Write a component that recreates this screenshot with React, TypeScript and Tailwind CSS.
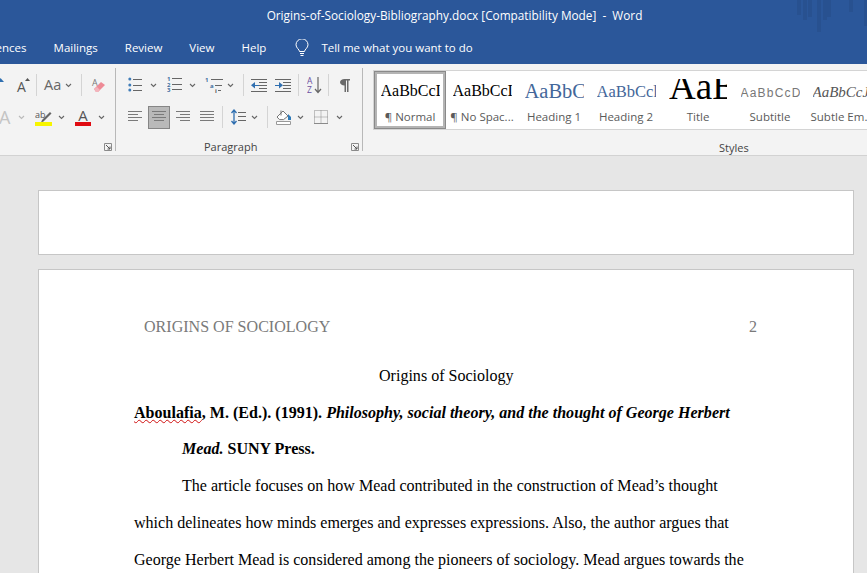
import React from "react";

const ui = "font-['Open_Sans','Noto_Sans',sans-serif]";

const Chev = ({ className = "" }: { className?: string }) => (
  <svg width="7" height="5" viewBox="0 0 7 5" className={className}>
    <path d="M1 1l2.5 2.5L6 1" fill="none" stroke="#666" strokeWidth="1.1" />
  </svg>
);
const Sep = ({ className = "" }: { className?: string }) => <div className={`w-px h-[22px] bg-[#d4d4d4] ${className}`} />;

const Lines = ({ w, ys, xs }: { w: number; ys: number[]; xs?: number[][] }) => (
  <svg width={w} height="16" viewBox={`0 0 ${w} 16`}>
    {ys.map((y, i) => (
      <path key={i} d={`M${xs?.[i]?.[0] ?? 0} ${y + 0.5}H${xs?.[i]?.[1] ?? w}`} stroke="#7a7a7a" strokeWidth="1" />
    ))}
  </svg>
);

const Bullets = () => (
  <svg width="14" height="16" viewBox="0 0 14 16">
    {[2, 8, 13].map((y) => (
      <g key={y}>
        <circle cx="1.8" cy={y} r="1.5" fill="#3f7cb8" />
        <path d={`M5 ${y + 0.5}H14`} stroke="#666" />
      </g>
    ))}
  </svg>
);
const Numbers = () => (
  <svg width="15" height="16" viewBox="0 0 15 16">
    {[[4, "1"], [10, "2"], [15, "3"]].map(([y, t]) => (
      <g key={t as string}>
        <text x="0" y={y as number} fontSize="6" fontWeight="700" fill="#3f6f9f" fontFamily="Open Sans">{t}</text>
        <path d={`M5 ${(y as number) - 2.5}H15`} stroke="#666" />
      </g>
    ))}
  </svg>
);
const Multi = () => (
  <svg width="18" height="16" viewBox="0 0 18 16">
    <text x="0" y="5" fontSize="6" fontWeight="700" fill="#3f6f9f" fontFamily="Open Sans">1</text>
    <path d="M6 2.5H18" stroke="#666" />
    <text x="5" y="10.500" fontSize="6" fontWeight="700" fill="#3f6f9f" fontFamily="Open Sans">a</text>
    <path d="M10 8.500H17" stroke="#666" />
    <text x="10" y="16" fontSize="6" fontWeight="700" fill="#555" fontFamily="Open Sans">i</text>
    <path d="M13 13.500H16" stroke="#666" />
  </svg>
);
const Indent = ({ flip }: { flip?: boolean }) => (
  <svg width="16" height="14" viewBox="0 0 16 14">
    {[1, 13].map((y) => <path key={y} d={`M0 ${y + 0.5}H16`} stroke="#666" />)}
    {[4, 7, 10].map((y) => <path key={y} d={`M8 ${y + 0.5}H16`} stroke="#666" />)}
    {flip ? (
      <path d="M0 7h4V4l4 3.200-4 3.200V8H0z" fill="#2f6fb0" />
    ) : (
      <path d="M8 7H4V4L0 7.200l4 3.200V8h4z" fill="#2f6fb0" />
    )}
  </svg>
);
const Sort = () => (
  <svg width="15" height="18" viewBox="0 0 15 18">
    <text x="0" y="8" fontSize="8.500" fill="#6a4fa0" fontFamily="Open Sans">A</text>
    <text x="0" y="17" fontSize="8.500" fill="#6a4fa0" fontFamily="Open Sans">Z</text>
    <path d="M11 1v15M8 13l3 3.500 3-3.500" fill="none" stroke="#666" strokeWidth="1.200" />
  </svg>
);
const Pilcrow = () => (
  <svg width="10" height="13" viewBox="0 0 10 13">
    <path d="M4.500 13V6.500C2 6.500 0 5 0 3.300S2 0 4.500 0H10v1.400H8.500V13H7V1.400H6V13z" fill="#6a6a6a" />
  </svg>
);
const Spacing = () => (
  <svg width="15" height="16" viewBox="0 0 15 16">
    <path d="M3 1v14M.5 4L3 1l2.500 3M.5 12L3 15l2.500-3" fill="none" stroke="#2f6fb0" strokeWidth="1.300" />
    {[3, 7, 11].map((y) => <path key={y} d={`M7 ${y + 0.5}H15`} stroke="#666" />)}
  </svg>
);
const Shading = () => (
  <svg width="16" height="16" viewBox="0 0 16 16">
    <path d="M1 8l6-6 5 5-4.500 3.600H3.500z" fill="#fff" stroke="#777" />
    <path d="M5 1.500v5" stroke="#777" />
    <path d="M12 5l3 3v3h-3z" fill="#2f7ab8" />
    <path d="M.5 12.500h14v3H.5z" fill="#fff" stroke="#999" />
  </svg>
);
const Borders = () => (
  <svg width="14" height="14" viewBox="0 0 14 14">
    <path d="M.5.5h13v13H.5zM7 .5v13M.5 7h13" fill="none" stroke="#8a8a8a" strokeDasharray="1 1" />
    <path d="M0 13.500h14" stroke="#8a8a8a" />
  </svg>
);
const Launcher = () => (
  <svg width="8" height="8" viewBox="0 0 8 8">
    <path d="M.5 7.500V.5h7v7z" fill="none" stroke="#8a8a8a" />
    <path d="M2 2l4 4M6 3.500V6H3.500" fill="none" stroke="#555" />
  </svg>
);
const Eraser = () => (
  <svg width="15" height="17" viewBox="0 0 15 17">
    <text x="1" y="9" fontSize="9" fill="#777" fontFamily="Open Sans">A</text>
    <path d="M3 12l7-7 4 3-7 7H5z" fill="#ee8a96" />
    <path d="M3 12l2 3h2l2-2-3-3z" fill="#f3b4bc" />
  </svg>
);
const Highlight = () => (
  <svg width="17" height="17" viewBox="0 0 17 17">
    <text x="0" y="9" fontSize="9" fill="#555" fontFamily="Open Sans">ab</text>
    <path d="M7 11l8-8 1.500 1.500-8 8-2.500 1z" fill="#666" />
    <path d="M0 13h17v4H0z" fill="#f7f500" />
  </svg>
);
const Bulb = () => (
  <svg width="14" height="18" viewBox="0 0 14 18">
    <path d="M4.500 12.500c0-2-3.500-3.500-3.500-6.700A6 6 0 0 1 13 5.800c0 3.200-3.500 4.700-3.500 6.700z" fill="none" stroke="#fff" strokeWidth="1" />
    <path d="M5 14.500h4M5.500 16.500h3" stroke="#fff" />
  </svg>
);

const serif = "font-['Liberation_Serif',serif]";
const sans = "font-['Liberation_Sans',sans-serif]";
const styles: { label: string; sample: string; box: string; cls: string }[] = [
  { label: "¶ Normal", sample: "AaBbCcI", box: "h-[35px] w-[59px]", cls: `${serif} text-[16px] text-black pt-[7px]` },
  { label: "¶ No Spac...", sample: "AaBbCcI", box: "h-[35px] w-[59px]", cls: `${serif} text-[16px] text-black pt-[7px]` },
  { label: "Heading 1", sample: "AaBbC", box: "h-[35px] w-[59px]", cls: `${serif} text-[20.5px] text-[#44679a] pt-[7px]` },
  { label: "Heading 2", sample: "AaBbCcl", box: "h-[35px] w-[59px]", cls: `${serif} text-[16.5px] text-[#44679a] pt-[8px]` },
  { label: "Title", sample: "AaB", box: "h-[27px] w-[58px] mt-[8px]", cls: `${serif} text-[37px] text-black -mt-[5px]` },
  { label: "Subtitle", sample: "AaBbCcD", box: "h-[35px] w-[59px]", cls: `${sans} text-[12px] text-[#777] tracking-[1.2px] pt-[9px]` },
  { label: "Subtle Em...", sample: "AaBbCcJ", box: "h-[35px] w-[59px]", cls: `${serif} text-[15px] text-[#555] italic pt-[8px]` },
];

export default function App() {
  return (
    <div className={`w-[867px] h-[573px] overflow-hidden bg-[#e6e6e6] flex flex-col ${ui}`}>
      <header className="relative h-[64px] shrink-0 bg-[#2b579a] text-white overflow-hidden">
        <div className="h-[32px] flex items-center justify-center pl-[42px] text-[11.8px] whitespace-pre">
          Origins-of-Sociology-Bibliography.docx [Compatibility Mode]  -  Word
        </div>
        <nav className="h-[32px] flex items-center text-[11.5px] -ml-[33px] whitespace-nowrap">
          <span>References</span>
          <span className="ml-[27px]">Mailings</span>
          <span className="ml-[27px]">Review</span>
          <span className="ml-[27px]">View</span>
          <span className="ml-[27px]">Help</span>
          <span className="ml-[29px] mr-[12px] flex"><Bulb /></span>
          <span>Tell me what you want to do</span>
        </nav>
        <svg className="absolute left-[790px] top-0" width="77" height="34" viewBox="0 0 77 34">
          {[[7, 15], [13, 20], [18, 17], [27, 32], [33, 20], [37, 17], [59, 12], [74, 26]].map(([x, h]) => (
            <rect key={x} x={x} y="0" width="4" height={h} fill="#285190" />
          ))}
        </svg>
      </header>

      <section className="h-[92px] shrink-0 bg-[#f3f3f3] border-b border-[#d2d2d2] flex text-[#444] text-[11px]">
        <div className="w-[116px] shrink-0 border-r border-[#b8b8b8] flex flex-col my-[4px] relative overflow-hidden">
          <div className="h-[28px] mt-[3px] flex items-center">
            <svg width="7" height="5" viewBox="0 0 7 5" className="-ml-[3px] -mt-[12px]"><path d="M0 5l3.500-4L7 5z" fill="#2f6fb0" /></svg>
            <span className="ml-[13px] w-[8px] text-[#555] text-[14px] leading-none mt-[3px]">A</span>
            <svg width="5" height="4" viewBox="0 0 5 4" className="-mt-[12px]"><path d="M0 0h5L2.500 3z" fill="#555" transform="rotate(180 2.500 2)" /></svg>
            <Sep className="ml-[6px]" />
            <span className="ml-[7px] w-[16px] text-[14.5px] text-[#666] leading-none">Aa</span>
            <Chev className="ml-[5px]" />
            <Sep className="ml-[9px]" />
            <span className="ml-[9px] flex"><Eraser /></span>
          </div>
          <div className="h-[32px] mt-[2px] flex items-center">
            <span className="-ml-[1px] text-[18px] text-[#c4c4c4] w-[13px] leading-none">A</span>
            <Chev className="ml-[6px] opacity-40" />
            <span className="ml-[10px] flex"><Highlight /></span>
            <Chev className="ml-[6px]" />
            <div className="ml-[10px] w-[16px] flex flex-col items-center">
              <span className="text-[15px] leading-[14px] text-[#555]">A</span>
              <span className="w-[16px] h-[4px] bg-[#e00b12]" />
            </div>
            <Chev className="ml-[7px]" />
          </div>
          <div className="mt-auto mb-[0px] flex justify-end pr-[3px]"><Launcher /></div>
        </div>

        <div className="w-[247px] shrink-0 border-r border-[#b8b8b8] flex flex-col my-[4px] pl-[12px]">
          <div className="h-[28px] mt-[3px] flex items-center">
            <Bullets />
            <Chev className="ml-[8px]" />
            <span className="ml-[10px] flex"><Numbers /></span>
            <Chev className="ml-[7px]" />
            <span className="ml-[9px] flex"><Multi /></span>
            <Chev className="ml-[4px]" />
            <Sep className="ml-[9px]" />
            <span className="ml-[7px] flex"><Indent /></span>
            <span className="ml-[8px] flex"><Indent flip /></span>
            <Sep className="ml-[7px]" />
            <span className="ml-[8px] flex"><Sort /></span>
            <Sep className="ml-[6px]" />
            <span className="ml-[11px] flex"><Pilcrow /></span>
          </div>
          <div className="h-[24px] mt-[6px] flex items-center">
            <Lines w={14} ys={[2, 5, 8, 11]} xs={[[0, 14], [0, 10], [0, 14], [0, 10]]} />
            <div className="ml-[6px] w-[22px] h-[23px] bg-[#b9b9b9] border border-[#858585] flex items-center justify-center">
              <Lines w={14} ys={[2, 5, 8, 11]} xs={[[0, 14], [2, 12], [0, 14], [2, 12]]} />
            </div>
            <span className="ml-[6px] flex"><Lines w={14} ys={[2, 5, 8, 11]} xs={[[0, 14], [4, 14], [0, 14], [4, 14]]} /></span>
            <span className="ml-[10px] flex"><Lines w={14} ys={[2, 5, 8, 11]} /></span>
            <Sep className="ml-[8px]" />
            <span className="ml-[8px] flex"><Spacing /></span>
            <Chev className="ml-[5px]" />
            <Sep className="ml-[9px]" />
            <span className="ml-[8px] flex"><Shading /></span>
            <Chev className="ml-[5px]" />
            <span className="ml-[10px] flex"><Borders /></span>
            <Chev className="ml-[8px]" />
          </div>
          <div className="mt-auto -mb-[3px] flex items-center text-[11px] leading-[14px] text-[#444]">
            <span className="ml-[76px]">Paragraph</span>
            <span className="ml-auto mr-[3px] flex"><Launcher /></span>
          </div>
        </div>

        <div className="flex-1 min-w-0 flex flex-col pt-[6px] pl-[10px] overflow-hidden">
          <div className="h-[60px] bg-white border border-[#d4d4d4] border-r-0 flex w-[600px] shrink-0">
            {styles.map((s, i) => (
              <div
                key={s.label}
                className={`w-[72px] shrink-0 h-[58px] flex flex-col items-center overflow-hidden ${i === 0 ? "border-[3px] border-[#b4b4b4] outline outline-1 outline-[#8a8a8a] -outline-offset-1 bg-white" : ""}`}
              >
                <div className={`${s.box} shrink-0 overflow-hidden ${i === 0 ? "-mt-[3px]" : ""}`}>
                  <div className={`whitespace-nowrap leading-[26px] ${s.cls}`}>{s.sample}</div>
                </div>
                <div className="text-[11.5px] text-[#5a5a5a] leading-[16px] whitespace-nowrap mt-[3px]">{s.label}</div>
              </div>
            ))}
          </div>
          <div className="mt-auto pl-[346px] text-[11px] text-[#444] leading-[14px]">Styles</div>
        </div>
      </section>

      <main className={`flex-1 min-h-0 pl-[38px] pr-[13px] pt-[34px] overflow-hidden ${serif} text-black text-[16.06px]`}>
        <div className="h-[65px] bg-white border border-[#c6c6c6]" />
        <article className="mt-[14px] h-[400px] bg-white border border-[#c6c6c6] pl-[95px] relative whitespace-nowrap">
          <div className="pl-[10px] pr-[96px] pt-[47px] h-[72px] flex justify-between text-[#7a7a7a] leading-[20px]">
            <span>ORIGINS OF SOCIOLOGY</span>
            <span>2</span>
          </div>
          <div className="leading-[36.7px] mt-[16px]">
            <p className="pl-[245px]">Origins of Sociology</p>
            <p className="font-bold">
              <span className="underline decoration-wavy decoration-[#d01010] decoration-1 underline-offset-1">Aboulafia</span>, M. (Ed.). (1991). <em>Philosophy, social theory, and the thought of George Herbert</em>
            </p>
            <p className="font-bold pl-[48px]"><em>Mead.</em> SUNY Press.</p>
            <p className="pl-[48px]">The article focuses on how Mead contributed in the construction of Mead’s thought</p>
            <p>which delineates how minds emerges and expresses expressions. Also, the author argues that</p>
            <p>George Herbert Mead is considered among the pioneers of sociology. Mead argues towards the</p>
          </div>
        </article>
      </main>
    </div>
  );
}
